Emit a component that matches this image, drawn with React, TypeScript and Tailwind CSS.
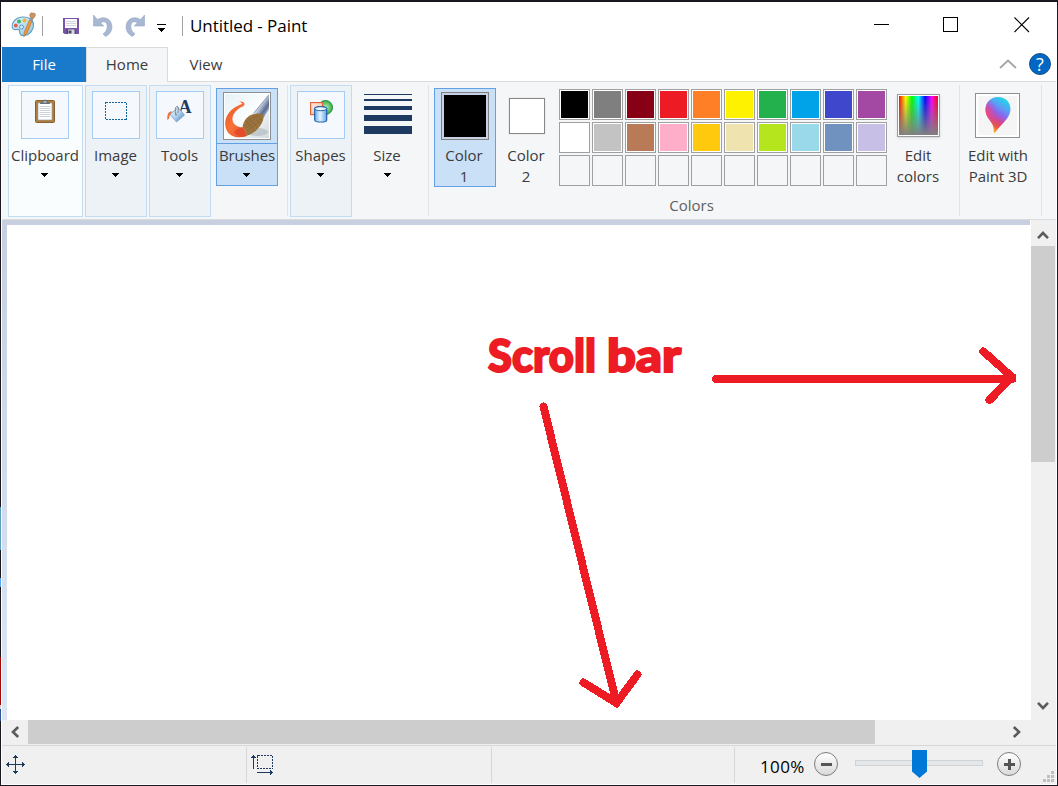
import React from "react";

const rowOne = ["#000000", "#7f7f7f", "#880015", "#ed1c24", "#ff7f27", "#fff200", "#22b14c", "#00a2e8", "#3f48cc", "#a349a4"];
const rowTwo = ["#ffffff", "#c3c3c3", "#b97a57", "#ffaec9", "#ffc90e", "#efe4b0", "#b5e61d", "#99d9ea", "#7092be", "#c8bfe7"];

function PaletteIcon() {
  return (
    <svg width="26" height="26" viewBox="0 0 26 26">
      <defs>
        <linearGradient id="pal" x1="0" y1="0" x2="1" y2="1">
          <stop offset="0" stopColor="#eaf7fd" />
          <stop offset="1" stopColor="#8cc4e2" />
        </linearGradient>
      </defs>
      <path d="M11 5C5 5.500 1 10 1.200 14.500c.1 2.500 1.800 3.500 4 3 2.500-.5 3.600.4 3.500 2.500-.1 3 2 4 5 3.500C19 22.500 23 18 22.500 12 22 7 17 4.500 11 5z" fill="url(#pal)" stroke="#5b9dc4" strokeWidth="1.100" />
      <circle cx="8" cy="9.500" r="2" fill="#3fb56b" />
      <circle cx="13.500" cy="8.500" r="2" fill="#f1b52b" />
      <circle cx="4.800" cy="13.500" r="1.900" fill="#e05c4b" />
      <circle cx="10.500" cy="15" r="2" fill="#d4effc" stroke="#4c91bf" strokeWidth=".9" />
      <path d="M21 9l-5 12-3 3.500.2-4L18.500 8z" fill="#f09a3e" stroke="#bd6c22" strokeWidth=".7" />
      <path d="M18.500 8.500l2.300.9 1.700-3-2.600-1.200z" fill="#8d97a3" />
      <path d="M19.500 5.500c-1.500-2-.6-4 .5-4.800 1.500.8 2.500 0 4 .8 1.200 1.500-.2 4-1.800 5z" fill="#c99363" stroke="#a97545" strokeWidth=".5" />
    </svg>
  );
}

function SaveIcon() {
  return (
    <svg width="16" height="16" viewBox="0 0 16 16">
      <path d="M0 0h16v16H1.500L0 14.500z" fill="#7953a8" />
      <path d="M2 1h12v9H2z" fill="#fafafd" />
      <path d="M3 3.500h10M3 5.500h10M3 7.500h10" stroke="#d2d2df" />
      <path d="M3.500 11.500h9V16h-9z" fill="#4b4a67" />
      <path d="M5 11.500h6.500V16H5z" fill="#d6dbe8" />
      <path d="M5.500 12.500h3v3h-3z" fill="#4b4a67" />
    </svg>
  );
}

function UndoIcon() {
  return (
    <svg width="20" height="22" viewBox="0 0 20 22">
      <path d="M.5 0v11h10.300L7.500 7.700C12 5.500 14.200 8 14.200 11.500c0 3-1.500 5.500-4.200 7.500l2.700 2.500c4.500-2.500 6.500-6.200 6.200-10.300C18.500 4 11 .2 4.500 4.600z" fill="#a9b8d2" stroke="#94a8c6" strokeWidth=".6" />
    </svg>
  );
}

function ClipboardGlyph() {
  return (
    <svg width="20" height="24" viewBox="0 0 20 24">
      <rect x=".5" y="1.500" width="19" height="22" rx="1" fill="#b17f3d" stroke="#876032" />
      <rect x="3" y="4" width="14" height="17" fill="#fff" stroke="#8a98a7" strokeWidth=".6" />
      <path d="M4.500 7.500h11M4.500 9.500h11M4.500 11.500h11M4.500 13.500h11M4.500 15.500h11M4.500 17.500h11" stroke="#cbd2da" />
      <path d="M5 5c0-2 2-1.500 3-3.200C8.500.5 11.500.5 12 1.800c1 1.700 3 1.200 3 3.200z" fill="#687078" />
      <path d="M8.500 3h3" stroke="#e5e8ea" />
    </svg>
  );
}

function SelectGlyph() {
  return (
    <svg width="22" height="18" viewBox="0 0 22 18" shapeRendering="crispEdges">
      <rect x=".5" y=".5" width="21" height="17" fill="none" stroke="#12649f" strokeDasharray="2 1" />
    </svg>
  );
}

function ToolsGlyph() {
  return (
    <svg width="28" height="24" viewBox="-1 0 28 24" className="overflow-visible">
      <defs>
        <linearGradient id="bucket" x1="0" y1="0" x2="1" y2="1">
          <stop offset="0" stopColor="#f2f8fd" />
          <stop offset=".5" stopColor="#b3d3ee" />
          <stop offset="1" stopColor="#3979bd" />
        </linearGradient>
      </defs>
      <text x="11.500" y="13.500" className="font-['Liberation_Serif'] text-[18px] font-bold" fill="#1f3a61">A</text>
      <path d="M3 15.500l8-7 6.500 7.500-8 7z" fill="url(#bucket)" stroke="#7b9fc2" strokeWidth=".8" />
      <path d="M8.500 15c0-3-.8-6 1-7.500 1.800-.8 2.500 1 1.300 6.500" fill="none" stroke="#7b8996" strokeWidth="1" />
      <path d="M5.500 12.500C2 12 0 14 .3 21l1.800-1.500c.2-3.500 1.500-5 3.400-7z" fill="#e9713c" />
      <circle cx="9" cy="15.500" r="1.100" fill="#8b98a4" />
    </svg>
  );
}

function BrushGlyph() {
  return (
    <svg width="44" height="44" viewBox="0 0 44 44">
      <defs>
        <linearGradient id="bg" x1="0" y1="0" x2="1" y2="1">
          <stop offset="0" stopColor="#e6f2f6" />
          <stop offset=".5" stopColor="#fbfdfe" />
          <stop offset="1" stopColor="#d3dadd" />
        </linearGradient>
        <linearGradient id="handle" x1="0" y1="0" x2="1" y2="1">
          <stop offset=".2" stopColor="#f5f8fb" />
          <stop offset=".45" stopColor="#c3cddc" />
          <stop offset=".68" stopColor="#5a6e92" />
          <stop offset=".85" stopColor="#aab6c8" />
        </linearGradient>
        <linearGradient id="stroke" x1="0" y1="0" x2="1" y2="1">
          <stop offset="0" stopColor="#e4552a" />
          <stop offset=".5" stopColor="#fa7137" />
          <stop offset="1" stopColor="#dd4829" />
        </linearGradient>
      </defs>
      <rect width="44" height="44" fill="url(#bg)" />
      <ellipse cx="32" cy="38" rx="11" ry="4" fill="#aeb5b9" opacity=".6" />
      <path d="M44 1L29 19l9.500 5L44 15z" fill="url(#handle)" />
      <path d="M44 .5L28.500 19.500" stroke="#76849a" strokeWidth=".8" />
      <path d="M14 7.500c3.500-.5 5.800.8 5.500 3-.3 1.600-1.500 2-4 3C10 17 7.300 21 7.500 26c.5 4 4 7 10.500 7.500l4 8.500C14 45 4.500 43 1.500 36-1.500 28.500 1 21 7 15.500c3.500-3 7.500-4.500 10-5.500 0-1.200-1-1.600-3-2.500z" fill="url(#stroke)" />
      <path d="M17.500 33.500C18.500 28 20 25 23.500 22.500 28 19.500 34 18.500 38 20.500c1.500 4-.5 9.500-5 14-3 3.500-7 6.500-12 7.500 1-3.500-.5-6-3.500-8.500z" fill="#9c753f" />
      <path d="M21 28l12-8M19 32l18-12M21 34l17-11M22 37l15-11M23 23l10 11M20 26l10 11M27 21l9 9M31 20l6 7" stroke="#6e5029" strokeWidth=".5" opacity=".5" />
      <path d="M9 38c3-3 6-4 8.500-4.500 2.500 1.500 4.500 5.500 3.500 8-3.500 1.500-9.500.5-12-3.500z" fill="#e34c28" />
    </svg>
  );
}

function ShapesGlyph() {
  return (
    <svg width="23" height="23" viewBox="0 0 23 23">
      <defs>
        <linearGradient id="cyl" x1="0" x2="1">
          <stop offset="0" stopColor="#68aeeb" />
          <stop offset=".45" stopColor="#e3f4ff" />
          <stop offset="1" stopColor="#61a6e7" />
        </linearGradient>
        <linearGradient id="sq" x1="0" y1="0" x2="1" y2="1">
          <stop offset="0" stopColor="#fff0e8" />
          <stop offset="1" stopColor="#f5ac8d" />
        </linearGradient>
        <radialGradient id="grn">
          <stop offset="0" stopColor="#b6edb7" />
          <stop offset="1" stopColor="#36ad41" />
        </radialGradient>
      </defs>
      <circle cx="15.500" cy="7.500" r="7" fill="url(#grn)" stroke="#23903a" />
      <rect x=".6" y="2.600" width="12" height="12" fill="url(#sq)" stroke="#da6639" strokeWidth="1.200" />
      <path d="M4.700 8.700c0-2.800 12-2.800 12 0v11.200c0 2.800-12 2.800-12 0z" fill="url(#cyl)" stroke="#2361aa" strokeWidth="1.200" />
      <ellipse cx="10.700" cy="8.700" rx="6" ry="2" fill="#eaf8ff" stroke="#2361aa" />
    </svg>
  );
}

function Paint3DGlyph() {
  return (
    <svg width="26" height="37" viewBox="0 0 26 37">
      <defs>
        <linearGradient id="drop" x1=".75" y1="0" x2=".3" y2="1">
          <stop offset="0" stopColor="#18dfe8" />
          <stop offset=".28" stopColor="#599ff5" />
          <stop offset=".46" stopColor="#8b65ed" />
          <stop offset=".64" stopColor="#d54591" />
          <stop offset=".8" stopColor="#eb5448" />
          <stop offset="1" stopColor="#ffc61d" />
        </linearGradient>
        <radialGradient id="dropPink" cx=".05" cy=".42" r=".4">
          <stop offset="0" stopColor="#f4447c" stopOpacity=".95" />
          <stop offset="1" stopColor="#c050c0" stopOpacity="0" />
        </radialGradient>
      </defs>
      <path d="M13 0c7.500 0 12.700 5.400 12.500 12.500C25.200 22 16 26.500 9.800 36c-1.200-.4-1.200-1.500-1.100-3.500C8.800 25 .7 22 .5 13 .4 5.500 5.500 0 13 0z" fill="url(#drop)" />
      <path d="M13 0c7.500 0 12.700 5.400 12.500 12.500C25.200 22 16 26.500 9.800 36c-1.200-.4-1.200-1.500-1.100-3.500C8.800 25 .7 22 .5 13 .4 5.500 5.500 0 13 0z" fill="url(#dropPink)" />
    </svg>
  );
}

function Triangle() {
  return (
    <svg width="7" height="4" viewBox="0 0 7 4" shapeRendering="crispEdges">
      <path d="M0 0h7v1H6v1H5v1H4v1H3V3H2V2H1V1H0z" fill="#000" />
    </svg>
  );
}

function Chevron({ turn }: { turn: string }) {
  return (
    <svg width="12" height="10" viewBox="0 0 12 10" className={turn}>
      <path d="M1 8.200L6 3l5 5.200" fill="none" stroke="#5c5c5c" strokeWidth="2.600" />
    </svg>
  );
}

function Label({ children, className = "" }: { children: React.ReactNode; className?: string }) {
  return <div className={"whitespace-nowrap text-center text-[15px] leading-[21px] text-[#3b3b3b] " + className}>{children}</div>;
}

function Group({ box, label, icon, labelClass }: { box: string; label: string; icon: React.ReactNode; labelClass?: string }) {
  return (
    <div className={"flex h-[132px] shrink-0 flex-col items-center border border-[#c2dcf4] pt-[5px] " + box}>
      <div className="flex h-12 w-12 shrink-0 items-center justify-center border border-[#a5cdf3] bg-[#f5f8fc] pb-2">{icon}</div>
      <Label className={"mt-[6px] " + (labelClass ?? "pr-px")}>{label}</Label>
      <div className="mt-[7px] pr-[2px]"><Triangle /></div>
    </div>
  );
}

function TitleBar() {
  return (
    <header className="flex h-[45px] shrink-0 items-start pl-[9px]">
      <div className="mt-[10px]"><PaletteIcon /></div>
      <div className="ml-[5px] mt-[14px] h-5 w-px bg-[#a0a0a0]" />
      <div className="ml-5 mt-4"><SaveIcon /></div>
      <div className="ml-[14px] mt-[13px]"><UndoIcon /></div>
      <div className="ml-3 mt-[13px] -scale-x-100"><UndoIcon /></div>
      <div className="ml-3 mt-[22px] flex w-[9px] flex-col items-center gap-[3px]">
        <div className="h-px w-[9px] bg-black" />
        <Triangle />
      </div>
      <div className="ml-4 mt-[14px] h-5 w-px bg-[#a0a0a0]" />
      <h1 className="ml-[7px] mt-3 whitespace-nowrap text-[17px] leading-6 tracking-[-0.060px] text-black">Untitled - Paint</h1>
      <div className="ml-auto mr-[26px] mt-[15px] flex">
        <svg width="16" height="16" viewBox="0 0 16 16" shapeRendering="crispEdges"><path d="M0 7.500h15" stroke="#000" /></svg>
        <svg width="16" height="16" viewBox="0 0 16 16" className="ml-[53px]" shapeRendering="crispEdges"><rect x=".5" y=".5" width="14" height="14" fill="none" stroke="#000" /></svg>
        <svg width="16" height="16" viewBox="0 0 16 16" className="ml-[55px]"><path d="M.5.500l14.500 14.500M15 .500L.5 15" stroke="#000" strokeWidth="1.100" /></svg>
      </div>
    </header>
  );
}

function TabRow() {
  return (
    <nav className="flex h-[35px] shrink-0 text-[15px] leading-[34px] text-[#3b3b3b]">
      <div className="w-[84px] bg-[#1979ca] text-center text-white">File</div>
      <div className="w-[82px] border-x border-t border-[#dadbdc] bg-[#f5f6f7] text-center leading-8">Home</div>
      <div className="flex flex-1 border-b border-[#dadbdc]">
        <div className="w-[76px] text-center">View</div>
        <div className="ml-auto mr-[5px] flex items-center gap-3">
          <svg width="18" height="10" viewBox="0 0 18 10"><path d="M1 9l8-7.500L17 9" fill="none" stroke="#a5a5a5" strokeWidth="1.800" /></svg>
          <div className="flex h-[22px] w-[22px] items-center justify-center rounded-full border border-[#17518b] bg-[#0067c5] text-[18px] leading-none text-white">?</div>
        </div>
      </div>
    </nav>
  );
}

function Swatch({ color }: { color?: string }) {
  return (
    <div className={"h-[31px] w-[31px] border border-[#a0a0a0] p-px " + (color ? "bg-white" : "")}>
      {color && <div className="h-full w-full" style={{ backgroundColor: color }} />}
    </div>
  );
}

function Ribbon() {
  return (
    <section className="flex h-[138px] shrink-0 items-start border-b border-[#dadbdc] bg-[#f5f6f7] pl-[6px] pt-[3px]">
      <Group box="w-[75px] bg-[#fafdfd] pr-px" label="Clipboard" icon={<ClipboardGlyph />} labelClass="" />
      <Group box="ml-[2px] w-[62px] bg-[#edf2f7]" label="Image" icon={<SelectGlyph />} />
      <Group box="ml-[2px] w-[62px] bg-[#edf2f7]" label="Tools" icon={<ToolsGlyph />} />
      <div className="ml-[5px] mt-[3px] flex h-[98px] w-[62px] shrink-0 flex-col items-center border border-[#62a2e4] bg-[#c9e0f7]">
        <div className="flex h-[55px] w-full items-start justify-center border-b border-[#62a2e4] pt-[3px]">
          <div className="h-12 w-12 border border-[#8c9095] bg-white p-px"><BrushGlyph /></div>
        </div>
        <Label className="mt-px tracking-[-0.150px]">Brushes</Label>
        <div className="mt-[7px] pr-[2px]"><Triangle /></div>
      </div>
      <div className="ml-[9px] h-[131px] w-px bg-[#e2e3e4]" />
      <Group box="ml-[2px] w-[62px] bg-[#edf2f7]" label="Shapes" icon={<ShapesGlyph />} />
      <div className="ml-3 flex w-12 flex-col items-center pt-[9px]">
        <div className="h-px w-12 bg-[#1f3a61]" />
        <div className="mt-1 h-[2px] w-12 bg-[#1f3a61]" />
        <div className="mt-[5px] h-1 w-12 bg-[#1f3a61]" />
        <div className="mt-[5px] h-[6px] w-12 bg-[#1f3a61]" />
        <div className="mt-[5px] h-2 w-12 bg-[#1f3a61]" />
        <Label className="mt-[11px] pr-[2px]">Size</Label>
        <div className="mt-[7px] pr-[2px]"><Triangle /></div>
      </div>
      <div className="ml-4 h-[131px] w-px bg-[#e2e3e4]" />
      <div className="ml-[5px] mt-[3px] flex h-[99px] w-[62px] shrink-0 flex-col items-center border border-[#62a2e4] bg-[#c9e0f7] pt-[3px]">
        <div className="h-12 w-12 shrink-0 border border-[#808080] bg-[#c8d0e4] p-[2px]"><div className="h-full w-full bg-black" /></div>
        <Label className="mt-[5px] pr-[2px]">Color<br />1</Label>
      </div>
      <div className="flex w-[62px] flex-col items-center pt-3">
        <div className="h-[38px] w-[38px] border border-[#ededed]"><div className="h-full w-full border border-[#868686] bg-white" /></div>
        <Label className="mt-[10px] pr-[2px]">Color<br />2</Label>
      </div>
      <div className="ml-px flex w-[328px] shrink-0 flex-col pt-1">
        <div className="grid grid-cols-10 gap-[2px]">
          {rowOne.map((c) => <Swatch key={c} color={c} />)}
          {rowTwo.map((c) => <Swatch key={c} color={c} />)}
          {rowOne.map((c) => <Swatch key={"custom" + c} />)}
        </div>
        <div className="mt-[9px] pr-[63px] text-center text-[15px] leading-[21px] text-[#5f5f5f]">Colors</div>
      </div>
      <div className="ml-[1px] flex w-[60px] flex-col items-center pt-[9px]">
        <div className="h-[43px] w-[43px] border border-[#9c9c9c] bg-white p-px shadow-sm">
          <div className="h-full w-full bg-[linear-gradient(to_top,#808080,transparent),linear-gradient(to_right,#f00,#ff0_17%,#0f0_33%,#0ff_50%,#00f_67%,#f0f_84%,#f00)]" />
        </div>
        <Label className="mt-2">Edit<br />colors</Label>
      </div>
      <div className="ml-[11px] h-[131px] w-px bg-[#e2e3e4]" />
      <div className="flex w-[75px] flex-col items-center pt-2">
        <div className="flex h-[45px] w-[45px] items-center justify-center border border-[#909090] bg-[#f5f5f5] shadow-[inset_0_0_0_2px_#fff]"><Paint3DGlyph /></div>
        <Label className="mt-[7px] pl-px tracking-[-0.080px]">Edit with<br />Paint 3D</Label>
      </div>
      <div className="ml-[6px] h-[131px] w-px bg-[#e2e3e4]" />
    </section>
  );
}

function Workspace() {
  return (
    <div className="flex h-[500px] shrink-0">
      <main className="flex w-[1028px] bg-gradient-to-b from-[#c7cfe0] to-[#dce6f4] pl-[5px] pt-[5px]">
        <div className="relative flex-1 bg-white">
          <svg width="1023" height="495" viewBox="7 225 1023 495" className="block">
            <g className="font-['Lato'] text-[45px] font-black" fill="#ed1c24" stroke="#ed1c24" strokeWidth="2">
              <text x="488" y="372" textLength="108" lengthAdjust="spacingAndGlyphs">Scroll</text>
              <text x="607" y="372" textLength="74" lengthAdjust="spacingAndGlyphs">bar</text>
            </g>
            <g fill="none" stroke="#ed1c24" strokeWidth="8" strokeLinecap="round" shapeRendering="crispEdges">
              <path d="M716 379H1012M983.500 351.500L1012 377M989.500 400L1012 377" />
              <path d="M543.500 406.500L616.500 703M583.500 682.500L616.500 703L637.500 674.500" />
            </g>
            <path d="M1010 374h6v8h-6z" fill="#ed1c24" />
          </svg>
        </div>
      </main>
      <aside className="flex flex-1 flex-col items-center border-l border-white bg-[#f0f0f0] pr-px">
        <div className="flex h-[26px] items-center pt-[3px]"><Chevron turn="" /></div>
        <div className="h-[216px] w-6 bg-[#cdcdcd]" />
        <div className="mt-auto flex h-7 items-center"><Chevron turn="rotate-180" /></div>
      </aside>
    </div>
  );
}

function StatusBar() {
  return (
    <footer className="flex h-[39px] shrink-0 items-start border-t border-[#d7d7d7] bg-[#f0f0f0] pt-px">
      <div className="flex h-9 w-[245px] items-start border-r border-[#d7d7d7] pl-1 pt-2">
        <svg width="19" height="19" viewBox="0 0 19 19" shapeRendering="crispEdges">
          <path d="M9.500 1v17M1 9.500h17" stroke="#1f3a61" />
          <path d="M9 0h1v1h1v1h1v1H7V2h1V1h1zM9 19h1v-1h1v-1h1v-1H7v1h1v1h1zM0 9v1h1v1h1v1h1V7H2v1H1v1zM19 9v1h-1v1h-1v1h-1V7h1v1h1v1z" fill="#1f3a61" />
        </svg>
      </div>
      <div className="flex h-9 w-[245px] items-start border-r border-[#d7d7d7] pl-1 pt-2">
        <svg width="22" height="20" viewBox="0 0 22 20" shapeRendering="crispEdges">
          <path d="M2.500 1v13M6 17.500h15" stroke="#1f3a61" />
          <path d="M2 0h1v1h1v1h1v1H0V2h1V1h1zM22 17v1h-1v1h-1v1h-1v-5h1v1h1v1z" fill="#1f3a61" />
          <rect x="6.500" y=".5" width="15" height="13" fill="none" stroke="#1f3a61" strokeDasharray="2 1" />
        </svg>
      </div>
      <div className="h-9 w-[243px] border-r border-[#d7d7d7]" />
      <div className="flex h-9 flex-1 items-start">
        <span className="ml-[25px] mt-2 w-[47px] whitespace-nowrap text-[17px] leading-6 tracking-[0.400px] text-black">100%</span>
        <div className="ml-[7px] mt-[5px] flex h-6 w-6 items-center justify-center rounded-full border border-[#7d7d7d] bg-gradient-to-b from-white to-[#d9d9d9]">
          <div className="h-[3px] w-[11px] bg-[#555]" />
        </div>
        <div className="relative ml-[17px] mt-[13px] h-[6px] w-[128px] border border-[#d0d2d3] bg-[#e5e8ea]">
          <svg width="15" height="28" viewBox="0 0 15 28" className="absolute left-[56px] top-[-11px]"><path d="M0 0h15v21.500L7.500 28 0 21.500z" fill="#0078d7" /></svg>
        </div>
        <div className="ml-[14px] mt-[5px] flex h-6 w-6 items-center justify-center rounded-full border border-[#7d7d7d] bg-gradient-to-b from-white to-[#d9d9d9]">
          <svg width="11" height="11" viewBox="0 0 11 11"><path d="M0 5.500h11M5.500 0v11" stroke="#555" strokeWidth="3" /></svg>
        </div>
        <svg width="11" height="11" viewBox="0 0 11 11" className="ml-auto mr-[2px] mt-6 shrink-0" shapeRendering="crispEdges">
          <path d="M8 0h3v3H8zM8 4h3v3H8zM4 4h3v3H4zM0 8h3v3H0zM4 8h3v3H4zM8 8h3v3H8z" fill="#bfbfbf" />
        </svg>
      </div>
    </footer>
  );
}

export default function App() {
  return (
    <div className="flex h-[786px] w-[1058px] overflow-hidden bg-[#191820] pb-px pt-[2px] font-['Open_Sans',sans-serif]">
      <div className="flex w-px flex-col pt-[505px]">
        <div className="h-[43px] bg-[#5c9ec0]" />
        <div className="mt-7 h-[9px] bg-[#58a6ee]" />
        <div className="mt-[70px] h-12 bg-[#a00b05]" />
        <div className="h-1 bg-[#d0d0d0]" />
        <div className="h-3 bg-[#2d5594]" />
      </div>
      <div className="flex h-[783px] w-[1056px] shrink-0 flex-col bg-white px-px">
        <TitleBar />
        <TabRow />
        <Ribbon />
        <Workspace />
        <div className="flex h-[25px] shrink-0 bg-[#f0f0f0]">
          <div className="flex h-6 w-[26px] items-center justify-center pr-px"><Chevron turn="-rotate-90" /></div>
          <div className="h-6 w-[847px] bg-[#cdcdcd]" />
          <div className="ml-auto mr-[26px] flex h-6 w-[26px] items-center justify-center"><Chevron turn="rotate-90" /></div>
        </div>
        <StatusBar />
      </div>
    </div>
  );
}
